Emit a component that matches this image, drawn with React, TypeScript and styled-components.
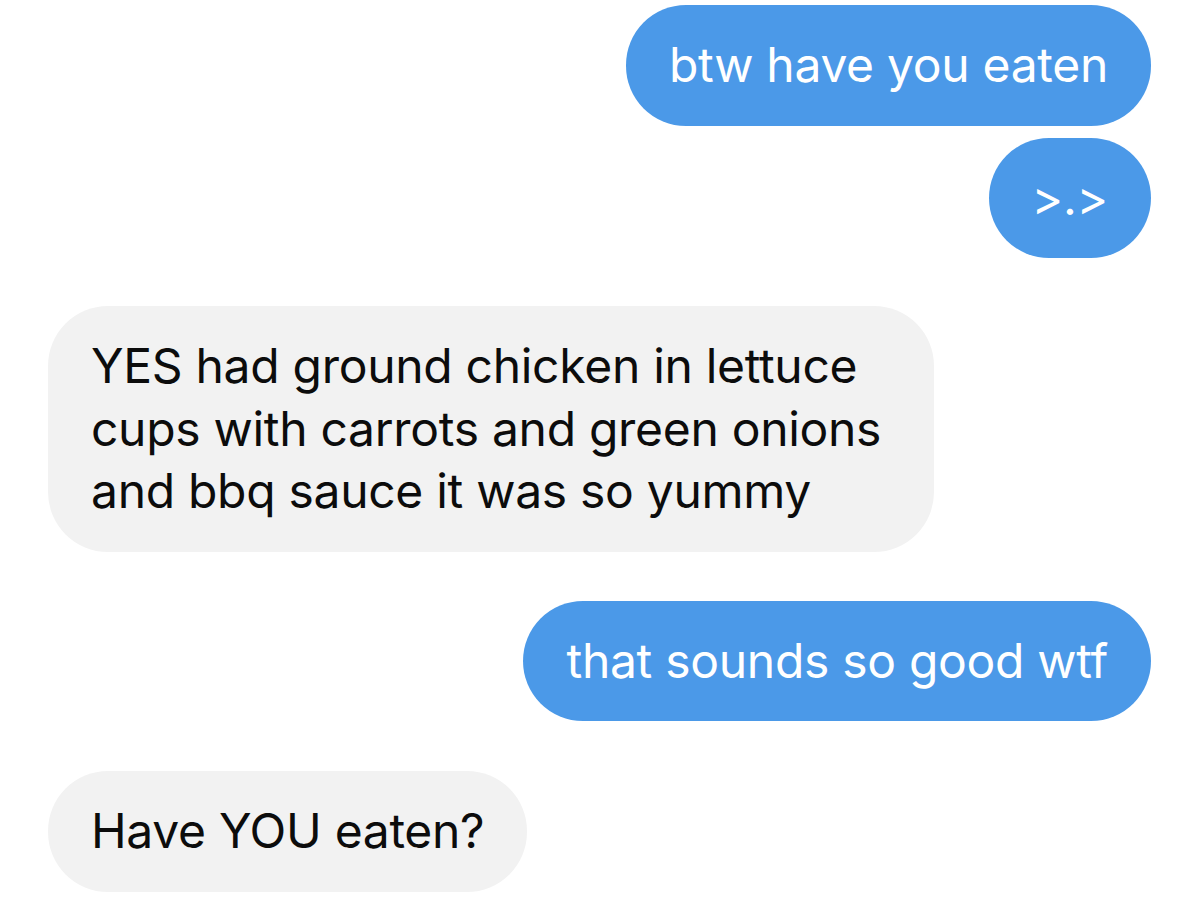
import React from "react";
import styled, { createGlobalStyle } from "styled-components";

const Global = createGlobalStyle`
  html, body { margin: 0; padding: 0; background: #ffffff; }
  body { font-family: Inter, "Liberation Sans", Arial, sans-serif; }
`;

const Thread = styled.div`
  display: flex;
  flex-direction: column;
  padding: 5px 48px 0 48px;
  width: 1199px;
  box-sizing: border-box;
`;

const Row = styled.div<{ $mine: boolean; $gap: number }>`
  display: flex;
  justify-content: ${(p) => (p.$mine ? "flex-end" : "flex-start")};
  margin-top: ${(p) => p.$gap}px;
`;

const Bubble = styled.div<{ $mine: boolean }>`
  box-sizing: border-box;
  max-width: 886px;
  background: ${(p) => (p.$mine ? "#4b99e8" : "#f2f2f2")};
  color: ${(p) => (p.$mine ? "#ffffff" : "#0c0c0c")};
  border-radius: 60px;
  padding: 29px 43px 29px 43px;
  font-size: 48px;
  line-height: 62.5px;
  letter-spacing: -0.3px;
`;

const messages: { mine: boolean; gap: number; text: string }[] = [
  { mine: true, gap: 0, text: "btw have you eaten" },
  { mine: true, gap: 12, text: ">.>" },
  {
    mine: false,
    gap: 48,
    text: "YES had ground chicken in lettuce cups with carrots and green onions and bbq sauce it was so yummy",
  },
  { mine: true, gap: 49, text: "that sounds so good wtf" },
  { mine: false, gap: 50, text: "Have YOU eaten?" },
];

export default function App() {
  return (
    <>
      <Global />
      <Thread>
        {messages.map((m, i) => (
          <Row key={i} $mine={m.mine} $gap={m.gap}>
            <Bubble $mine={m.mine}>{m.text}</Bubble>
          </Row>
        ))}
      </Thread>
    </>
  );
}
